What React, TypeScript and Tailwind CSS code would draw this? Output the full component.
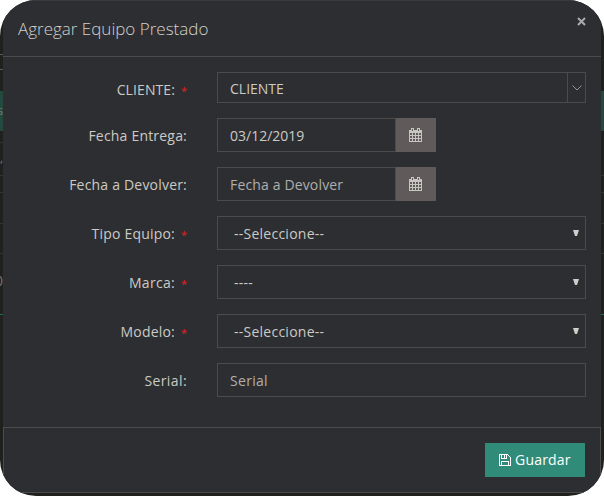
import React from "react";

function Required() {
  return <span className="ml-[6px] mr-px w-[5px] pt-[2px] text-[11px] leading-5 tracking-normal text-[#ee2020]">*</span>;
}

function Field({ label, tracking = "tracking-[0.2px]", labelTop = "pt-[2px]", required, children }: { label: string; tracking?: string; labelTop?: string; required?: boolean; children: React.ReactNode }) {
  return (
    <div className="mb-[15px] flex">
      <div className={`flex w-[184px] shrink-0 items-center justify-end whitespace-nowrap text-[#cccac4] ${labelTop}`}>
        <span className={tracking}>{label}</span>
        {required && <Required />}
      </div>
      <div className="ml-[30px] flex w-[369px]">{children}</div>
    </div>
  );
}

function CalendarIcon() {
  return (
    <svg width="13" height="14" viewBox="0 0 13 14" shapeRendering="crispEdges" fill="#c8c6c0">
      <path fillRule="evenodd" d="M0 2h2V0h3v2h3V0h3v2h2v12H0zM1 5v2h2V5zm3 0v2h2V5zm3 0v2h2V5zm3 0v2h2V5zM1 8v2h2V8zm3 0v2h2V8zm3 0v2h2V8zm3 0v2h2V8zM1 11v2h2v-2zm3 0v2h2v-2zm3 0v2h2v-2zm3 0v2h2v-2zM3 1v2h1V1zm6 0v2h1V1z" />
    </svg>
  );
}

function DateInput({ text, tone }: { text: string; tone: string }) {
  return (
    <>
      <div className={`flex h-[34px] w-[179px] items-center border border-[#4b4b4c] pl-3 pt-px ${tone}`}>
        <span>{text}</span>
      </div>
      <div className="flex h-[34px] w-10 items-center bg-[#605a5a] pl-[13px]"><CalendarIcon /></div>
    </>
  );
}

function Select({ text, tracking = "tracking-[0.25px]" }: { text: string; tracking?: string }) {
  return (
    <div className="flex h-[34px] w-full items-center justify-between border border-[#4b4b4c] pl-4 pr-[6px] pt-px text-[#cccac4]">
      <span className={tracking}>{text}</span>
      <svg width="6" height="6" viewBox="0 0 6 6" className="mb-px" fill="#d0cec8"><path d="M0 0h6L4 6H2z" /></svg>
    </div>
  );
}

/* Strips of the dimmed page that stay visible beside the dialog. */
function PageEdge({ left }: { left?: boolean }) {
  return (
    <div className="w-[3px] shrink-0 overflow-hidden border-[#181919] text-[12px] leading-[14px] text-[#777772]">
      <div className={`h-[55px] ${left ? "border-b border-[#5a5a58]" : ""}`} />
      <div className={`h-[15px] ${left ? "border-b border-[#5a5a58]" : ""}`} />
      <div className="h-[21px]" />
      <div className="flex h-10 items-center justify-end bg-[#24493f]">{left && <span>s</span>}</div>
      <div className={`h-3 border-b ${left ? "border-[#333]" : "border-transparent"}`} />
      <div className="flex h-[33px] justify-end border-b border-[#333] pt-2">{left && <span>,</span>}</div>
      <div className="h-[17px] border-b border-[#333]" />
      <div className="h-[31px] border-b border-[#333]" />
      <div className="h-[30px] border-b border-[#333]" />
      <div className="flex h-[61px] justify-end border-b border-[#246b5a] pt-5">{left && <span className="text-[14px]">0</span>}</div>
    </div>
  );
}

export default function App() {
  return (
    <div className="flex h-[496px] w-[604px] overflow-hidden rounded-[36px] bg-[#20201f] font-['Open_Sans',sans-serif] text-[14px] leading-5">
      <PageEdge left />
      <div className="flex h-[493px] w-[598px] shrink-0 flex-col border-t border-[#383b3b] bg-[#2d2e32]">
        <header className="flex h-14 shrink-0 justify-between border-b border-[#4b4b4c] px-[15px]">
          <h1 className="pt-[17px] text-[17px] font-light leading-[22px] text-[#d2d0ca]">Agregar Equipo Prestado</h1>
          <svg className="mt-4" width="9" height="9" viewBox="0 0 9 9" fill="none" stroke="#aaa" strokeWidth="2"><path d="M1 1l7 7M8 1L1 8" /></svg>
        </header>
        <main className="h-[370px] shrink-0 pt-[15px]">
          <Field label="CLIENTE:" labelTop="pt-[5px]" tracking="tracking-[0.1px]" required>
            <div className="flex h-[31px] w-full border border-[#4b4b4c]">
              <div className="flex flex-1 items-center pl-3 pt-[3px] text-[#cccac4]">CLIENTE</div>
              <div className="flex w-[18px] items-center justify-center border-l border-[#4b4b4c] pt-px">
                <svg width="10" height="6" viewBox="0 0 10 6" fill="none" stroke="#96948f"><path d="M.5.5L5 5 9.500.5" /></svg>
              </div>
            </div>
          </Field>
          <Field label="Fecha Entrega:"><DateInput text="03/12/2019" tone="text-[#cccac4]" /></Field>
          <Field label="Fecha a Devolver:"><DateInput text="Fecha a Devolver" tone="text-[#b0afab] tracking-[0.15px]" /></Field>
          <Field label="Tipo Equipo:" required><Select text="--Seleccione--" /></Field>
          <Field label="Marca:" tracking="tracking-[0.3px]" required><Select text="----" /></Field>
          <Field label="Modelo:" required><Select text="--Seleccione--" /></Field>
          <Field label="Serial:" tracking="tracking-[0.4px]">
            <div className="flex h-[34px] w-full items-center border border-[#4b4b4c] pl-3 pt-px tracking-[0.3px] text-[#b0afab]">Serial</div>
          </Field>
        </main>
        <footer className="flex flex-1 justify-end border border-[#4b4b4c] pr-[15px] pt-[15px]">
          <button className="flex h-[34px] w-[100px] items-center gap-1 bg-[#308c79] pl-[14px] text-white">
            <svg width="12" height="12" viewBox="0 0 12 12" fill="none" stroke="white" shapeRendering="crispEdges"><path d="M.5.5h8l3 3v8H.5zM2.500.5v4h5v-4M2.500 11.500v-4h7v4M5.500 1v3" /></svg>
            <span className="tracking-[0.2px]">Guardar</span>
          </button>
        </footer>
      </div>
      <PageEdge />
    </div>
  );
}
